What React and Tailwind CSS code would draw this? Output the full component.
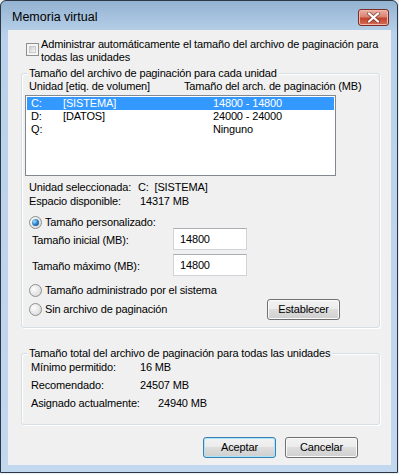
import React from 'react';

const drives = [
  { letter: 'C:', label: '[SISTEMA]', size: '14800 - 14800', selected: true },
  { letter: 'D:', label: '[DATOS]', size: '24000 - 24000' },
  { letter: 'Q:', label: '', size: 'Ninguno' },
];

const totals = [
  { label: 'Mínimo permitido:', value: '16 MB', width: 'w-[109px]' },
  { label: 'Recomendado:', value: '24507 MB', width: 'w-[109px]' },
  { label: 'Asignado actualmente:', value: '24940 MB', width: 'w-[127px]' },
];

const Checkbox = () => (
  <div className="w-[13px] h-[13px] shrink-0 border border-[#8e8f8f] bg-[#f4f4f4] p-[2px]">
    <div className="w-full h-full border border-[#c9c9c9] bg-linear-to-br from-[#cdcdcd] to-[#f8f8f8]" />
  </div>
);

const Radio = ({ checked }) => (
  <div className="w-[13px] h-[13px] shrink-0 rounded-full border border-[#8e8f8f] bg-radial-[at_35%_35%] from-[#fdfdfd] to-[#d2d2d2] flex items-center justify-center">
    {checked && (
      <div className="w-[7px] h-[7px] rounded-full bg-radial-[at_35%_35%] from-[#a6e2ff] via-[#2b7fc5] to-[#0d3670]" />
    )}
  </div>
);

const Button = ({ children, primary }) => (
  <button
    className={`h-[21px] w-[73px] rounded-[3px] border text-center leading-[19px] text-black bg-[linear-gradient(#f2f2f2,#ebebeb_50%,#dddddd_50%,#cfcfcf)] ${
      primary
        ? 'border-[#3c7fb1] shadow-[inset_0_0_0_1px_#a8e5fa]'
        : 'border-[#707070] shadow-[inset_0_0_0_1px_#fbfbfb]'
    }`}
  >
    {children}
  </button>
);

const TextBox = ({ value }) => (
  <div className="w-[74px] h-[22px] border border-[#d0d3d8] border-t-[#abadb3] bg-white pl-[6px] leading-[20px]">
    {value}
  </div>
);

const CloseIcon = () => (
  <svg width="13" height="11" viewBox="0 0 13 11">
    <path d="M2 1.5 L11 9.5 M11 1.5 L2 9.5" stroke="#6b2a26" strokeWidth="4" strokeLinecap="round" opacity="0.55" />
    <path d="M2 1.5 L11 9.5 M11 1.5 L2 9.5" stroke="#ffffff" strokeWidth="2.2" strokeLinecap="round" />
  </svg>
);

export default function App() {
  return (
    <div className="w-[399px] h-[474px] bg-[#e8edf2] font-['Liberation_Sans',Arial,sans-serif] text-[11px] tracking-[-0.15px] text-black">
      <div className="w-[398px] h-[473px] rounded-t-[6px] border border-[#2c3846] bg-linear-to-b from-[#93b3d2] via-[#b9d1ea] via-[7%] to-[#c2d8ef] flex flex-col">
        {/* title bar */}
        <div className="h-[29px] flex items-center justify-between pt-[4px] pl-[11px] pr-[8px]">
          <span className="text-[12.5px] tracking-normal">Memoria virtual</span>
          <div className="w-[31px] h-[17px] rounded-[3px] border border-[#7a2c25] bg-[linear-gradient(#eab0a3,#d98473_45%,#c3442f_55%,#d36c55)] shadow-[inset_0_0_0_1px_#f1b9ab] flex items-center justify-center">
            <CloseIcon />
          </div>
        </div>

        {/* client area */}
        <div className="ml-[7px] w-[383px] h-[435px] bg-[#f0f0f0]">
          <div className="mt-[8px] ml-[18px] flex items-start gap-[2px]">
            <div className="mt-[5px]">
              <Checkbox />
            </div>
            <p className="w-[345px] leading-[13px]">
              Administrar automáticamente el tamaño del archivo de paginación para todas las unidades
            </p>
          </div>

          <fieldset className="mt-[2px] ml-[13px] w-[359px] rounded-[3px] border border-[#d5dfe5] shadow-[1px_1px_0_#fff,inset_1px_1px_0_#fff] pb-[7px]">
            <legend className="ml-[5px] px-[2px] leading-[14px] bg-[#f0f0f0]">
              Tamaño del archivo de paginación para cada unidad
            </legend>
            <div className="ml-[7px] flex leading-[13px]">
              <span className="w-[155px]">Unidad [etiq. de volumen]</span>
              <span>Tamaño del arch. de paginación (MB)</span>
            </div>

            <div className="mt-[2px] ml-[3px] w-[311px] h-[81px] border border-[#828790] bg-white p-[1px]">
              {drives.map((d) => (
                <div
                  key={d.letter}
                  className={`flex h-[13px] leading-[13px] pl-[4px] ${d.selected ? 'bg-[#3399ff] text-white' : ''}`}
                >
                  <span className="w-[32px]">{d.letter}</span>
                  <span className="w-[150px]">{d.label}</span>
                  <span>{d.size}</span>
                </div>
              ))}
            </div>

            <div className="mt-[4px] ml-[7px] leading-[14px]">
              <div className="flex">
                <span className="w-[109px]">Unidad seleccionada:</span>
                <span>C:&nbsp;&nbsp;[SISTEMA]</span>
              </div>
              <div className="flex">
                <span className="w-[111px]">Espacio disponible:</span>
                <span>14317 MB</span>
              </div>
            </div>

            <div className="mt-[8px] ml-[7px] h-[12px] flex items-center gap-[3px]">
              <Radio checked />
              <span>Tamaño personalizado:</span>
            </div>
            <div className="ml-[10px] flex items-center h-[22px]">
              <span className="w-[141px] pt-[3px]">Tamaño inicial (MB):</span>
              <TextBox value="14800" />
            </div>
            <div className="mt-[4px] ml-[10px] flex items-center h-[22px]">
              <span className="w-[141px] pt-[3px]">Tamaño máximo (MB):</span>
              <TextBox value="14800" />
            </div>
            <div className="mt-[8px] ml-[7px] h-[13px] flex items-center gap-[3px]">
              <Radio />
              <span>Tamaño administrado por el sistema</span>
            </div>
            <div className="mt-[2px] ml-[7px] h-[21px] flex items-center">
              <div className="w-[238px] flex items-center gap-[3px]">
                <Radio />
                <span>Sin archivo de paginación</span>
              </div>
              <Button>Establecer</Button>
            </div>
          </fieldset>

          <fieldset className="mt-[18px] ml-[13px] w-[359px] rounded-[3px] border border-[#d5dfe5] shadow-[1px_1px_0_#fff,inset_1px_1px_0_#fff] pb-[12px]">
            <legend className="ml-[5px] px-[2px] leading-[14px] bg-[#f0f0f0]">
              Tamaño total del archivo de paginación para todas las unidades
            </legend>
            <div className="-mt-[2px] ml-[9px]">
              {totals.map((t) => (
                <div key={t.label} className="flex h-[18px] leading-[18px]">
                  <span className={t.width}>{t.label}</span>
                  <span>{t.value}</span>
                </div>
              ))}
            </div>
          </fieldset>

          <div className="mt-[12px] pr-[33px] flex justify-end gap-[9px]">
            <Button primary>Aceptar</Button>
            <Button>Cancelar</Button>
          </div>
        </div>
      </div>
    </div>
  );
}
